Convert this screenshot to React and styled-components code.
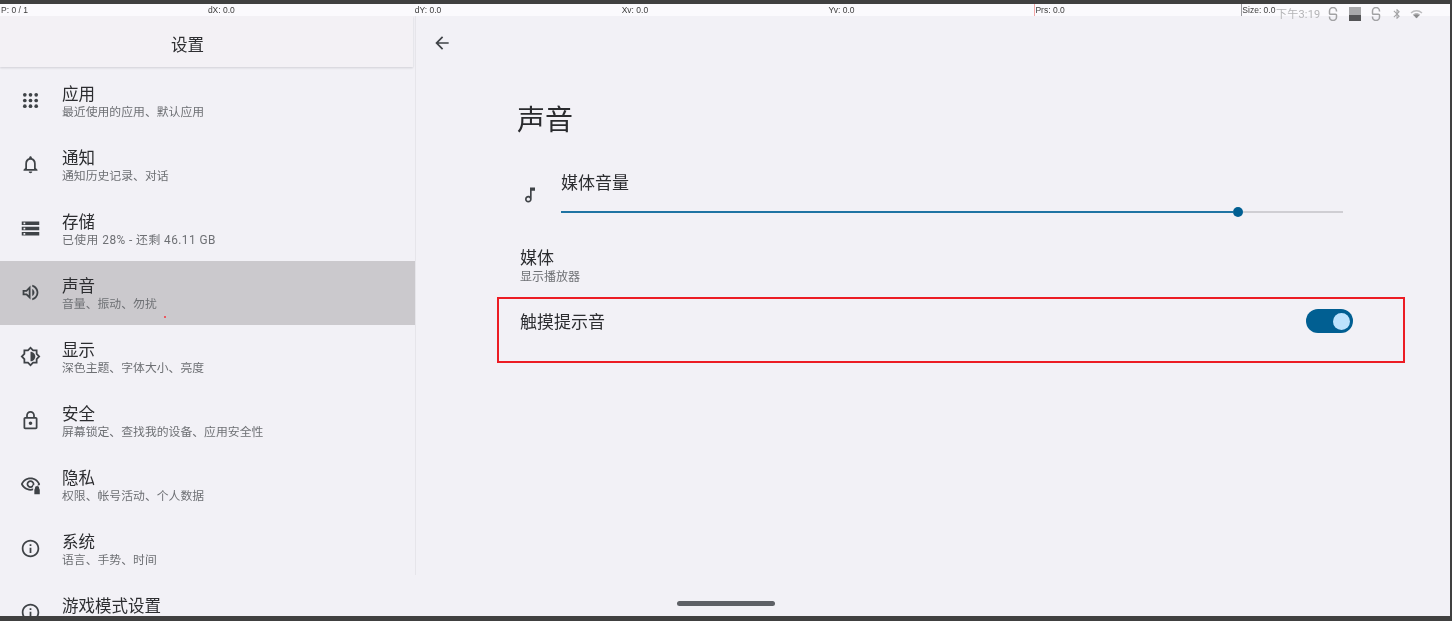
import React from "react";
import styled, { createGlobalStyle } from "styled-components";

const Global = createGlobalStyle`
  html, body {
    margin: 0;
    padding: 0;
    background: #404040;
    overflow: hidden;
  }
  body {
    font-family: Roboto, "Noto Sans CJK SC", sans-serif;
  }
`;

const Frame = styled.div`
  position: relative;
  width: 1452px;
  height: 621px;
  box-sizing: border-box;
  padding: 4px 2px 5px 0;
  display: flex;
  flex-direction: column;
  overflow: hidden;
  background: #404040;
  filter: blur(0.3px);
`;

const DebugBar = styled.div`
  height: 12px;
  flex: none;
  display: grid;
  grid-template-columns: repeat(7, 206.9px);
  background: #fbfafd;
`;

const DebugCell = styled.div`
  box-sizing: border-box;
  height: 12px;
  padding-left: ${({ $mark }) => ($mark ? "0" : "1px")};
  border-left: ${({ $mark }) => ($mark ? `1px solid ${$mark}` : "none")};
  font: 8.5px/13px "Liberation Sans", sans-serif;
  color: #3c3c3c;
  white-space: nowrap;
`;

const StatusBar = styled.div`
  position: absolute;
  top: 7px;
  left: 1276px;
  height: 14px;
  display: flex;
  align-items: center;
  color: #a2a2a4;
`;

const Clock = styled.span`
  width: 52px;
  margin-top: 1px;
  font: 11px/14px Roboto, "Noto Sans CJK SC", sans-serif;
  letter-spacing: 0.2px;
  color: #b4b4b6;
  white-space: nowrap;
`;

const StatusGlyph = styled.svg`
  width: ${({ $w }) => $w}px;
  height: 14px;
  margin-right: ${({ $gap }) => $gap}px;
  flex: none;
`;

const Screen = styled.div`
  flex: 1;
  min-height: 0;
  display: flex;
  background: #f2f1f6;
  overflow: hidden;
`;

const Sidebar = styled.nav`
  width: 415px;
  flex: none;
  display: flex;
  flex-direction: column;
`;

const SideHeader = styled.header`
  height: 51px;
  flex: none;
  width: 413px;
  box-sizing: border-box;
  margin-bottom: 2px;
  padding: 4px 38px 0 0;
  display: flex;
  align-items: center;
  justify-content: center;
  font-size: 16.5px;
  color: #2e2f32;
  box-shadow: 0 1px 2px rgba(90, 90, 100, 0.22);
  background: #f3f1f5;
`;

const SideRow = styled.div`
  position: relative;
  height: 64px;
  flex: none;
  box-sizing: border-box;
  padding-left: 20px;
  display: flex;
  align-items: center;
  gap: 21px;
  background: ${({ $active }) => ($active ? "#cbc9cd" : "transparent")};

  > svg {
    margin-top: -1px;
  }
`;

const Icon = styled.svg`
  width: ${({ $size }) => $size || 21}px;
  height: ${({ $size }) => $size || 21}px;
  flex: none;
  fill: #3f4347;
`;

const SideText = styled.div`
  padding-top: 3px;
  display: flex;
  flex-direction: column;
`;

const SideTitle = styled.div`
  font-size: 16.5px;
  line-height: 20px;
  color: #2c2d30;
  white-space: nowrap;
`;

const SideSub = styled.div`
  margin-top: -2px;
  min-height: 18px;
  font-size: 11.85px;
  line-height: 18px;
  letter-spacing: ${({ $spacing }) => $spacing || 0}px;
  color: #6e7074;
  white-space: nowrap;
`;

const RedSpeck = styled.span`
  position: absolute;
  left: 164px;
  top: 55px;
  width: 2px;
  height: 2px;
  background: #ea5a62;
`;

const Divider = styled.div`
  width: 1px;
  height: 559px;
  flex: none;
  background: #e6e5ea;
`;

const Detail = styled.main`
  flex: 1;
  min-width: 0;
  box-sizing: border-box;
  padding: 17px 45px 0 81px;
  display: flex;
  flex-direction: column;
`;

const BackButton = styled.div`
  height: 20px;
  margin-left: -65px;
  display: flex;
  align-items: center;
`;

const PageTitle = styled.h1`
  margin: 48px 0 0 20px;
  font-size: 28px;
  line-height: 40px;
  font-weight: 400;
  color: #2a2b2e;
`;

const VolumeRow = styled.div`
  margin-top: 30px;
  padding: 0 62px 0 23px;
  display: flex;
  align-items: center;
  gap: 21px;

  > svg {
    margin-top: 2px;
  }
`;

const VolumeBody = styled.div`
  flex: 1;
  display: flex;
  flex-direction: column;
`;

const VolumeLabel = styled.div`
  font-size: 17px;
  line-height: 24px;
  color: #2c2d30;
`;

const Slider = styled.div`
  margin-top: 12px;
  height: 10px;
  display: flex;
  align-items: center;
`;

const TrackOn = styled.div`
  flex: 672;
  height: 2px;
  background: #1f74a3;
`;

const Thumb = styled.div`
  width: 10px;
  height: 10px;
  flex: none;
  border-radius: 50%;
  background: #015f92;
`;

const TrackOff = styled.div`
  flex: 100;
  height: 2px;
  background: #cfced3;
`;

const MediaBlock = styled.div`
  margin-top: 29px;
  padding-left: 23px;
  display: flex;
  flex-direction: column;
`;

const MediaTitle = styled.div`
  font-size: 17px;
  line-height: 24px;
  color: #2c2d30;
`;

const MediaSub = styled.div`
  font-size: 12px;
  line-height: 14px;
  color: #6e7074;
`;

const Highlight = styled.section`
  margin-top: 13px;
  height: 66px;
  box-sizing: border-box;
  border: 2px solid #ec1c24;
  padding: 10px 50px 0 21px;
  display: flex;
  align-items: flex-start;
  justify-content: space-between;
`;

const TouchLabel = styled.div`
  margin-top: 1px;
  font-size: 17px;
  line-height: 24px;
  color: #2c2d30;
`;

const Toggle = styled.div`
  width: 47px;
  height: 24px;
  box-sizing: border-box;
  padding-right: 3px;
  border-radius: 12px;
  background: #015f92;
  display: flex;
  align-items: center;
  justify-content: flex-end;
`;

const ToggleKnob = styled.div`
  width: 17px;
  height: 17px;
  border-radius: 50%;
  background: #bde3fd;
`;

const GestureBar = styled.div`
  position: absolute;
  left: 677px;
  top: 601px;
  width: 98px;
  height: 5px;
  border-radius: 3px;
  background: #5e6166;
`;

const paths = {
  bell: "M12 22c1.1 0 2-.9 2-2h-4c0 1.1.9 2 2 2zm6-6v-5c0-3.07-1.63-5.64-4.5-6.32V4c0-.83-.67-1.5-1.5-1.5s-1.5.67-1.5 1.5v.68C7.64 5.36 6 7.92 6 11v5l-2 2v1h16v-1l-2-2zm-2 1H8v-6c0-2.48 1.51-4.5 4-4.5s4 2.02 4 4.5v6z",
  storage: "M2 20h20v-4H2v4zm2-3h2v2H4v-2zM2 4v4h20V4H2zm4 3H4V5h2v2zm-4 7h20v-4H2v4zm2-3h2v2H4v-2z",
  sound: "M3 9v6h4l5 5V4L7 9H3zm7-.17v6.34L7.83 13H5v-2h2.83L10 8.83zM16.5 12c0-1.77-1.02-3.29-2.5-4.03v8.05c1.48-.73 2.5-2.25 2.5-4.02zM14 3.23v2.06c2.89.86 5 3.54 5 6.71s-2.11 5.85-5 6.71v2.06c4.01-.91 7-4.49 7-8.77 0-4.28-2.99-7.86-7-8.77z",
  display: "M20 8.69V4h-4.69L12 .69 8.69 4H4v4.69L.69 12 4 15.31V20h4.69L12 23.31 15.31 20H20v-4.69L23.31 12 20 8.69zm-2 5.79V18h-3.52L12 20.48 9.52 18H6v-3.52L3.52 12 6 9.52V6h3.52L12 3.52 14.48 6H18v3.52L20.48 12 18 14.48zM12 6.5v11c3.03 0 5.5-2.47 5.5-5.5S15.03 6.5 12 6.5z",
  lock: "M18 8h-1V6c0-2.76-2.24-5-5-5S7 3.24 7 6v2H6c-1.1 0-2 .9-2 2v10c0 1.1.9 2 2 2h12c1.1 0 2-.9 2-2V10c0-1.1-.9-2-2-2zM9 6c0-1.66 1.34-3 3-3s3 1.34 3 3v2H9V6zm9 14H6V10h12v10zm-6-3c1.1 0 2-.9 2-2s-.9-2-2-2-2 .9-2 2 .9 2 2 2z",
  info: "M11 7h2v2h-2zm0 4h2v6h-2zm1-9C6.48 2 2 6.48 2 12s4.48 10 10 10 10-4.48 10-10S17.52 2 12 2zm0 18c-4.41 0-8-3.59-8-8s3.59-8 8-8 8 3.59 8 8-3.59 8-8 8z",
  eye: "M12 6c3.79 0 7.17 2.13 8.82 5.5C19.17 14.87 15.79 17 12 17s-7.17-2.13-8.82-5.5C4.83 8.13 8.21 6 12 6m0-2C7 4 2.73 7.11 1 11.5 2.73 15.89 7 19 12 19s9.27-3.11 11-7.5C21.27 7.11 17 4 12 4zm0 5c1.38 0 2.5 1.12 2.5 2.5S13.38 14 12 14s-2.5-1.12-2.5-2.5S10.62 9 12 9m0-2c-2.48 0-4.5 2.02-4.5 4.5S9.52 16 12 16s4.5-2.02 4.5-4.5S14.48 7 12 7z",
  music: "M12 3l.01 10.55c-.59-.34-1.27-.54-2-.54C7.79 13.01 6 14.8 6 17s1.79 4 4.01 4S14 19.2 14 17V7h4V3h-6zm-1.99 16c-1.1 0-2-.9-2-2s.9-2 2-2 2 .9 2 2-.9 2-2 2z",
  back: "M20 11H7.83l5.59-5.59L12 4l-8 8 8 8 1.41-1.41L7.83 13H20v-2z",
  bluetooth: "M17.71 7.71L12 2h-1v7.59L6.41 5 5 6.41 10.59 12 5 17.59 6.41 19 11 14.41V22h1l5.71-5.71-4.3-4.29 4.3-4.29zM13 5.83l1.88 1.88L13 9.59V5.83zm1.88 10.46L13 18.17v-3.76l1.88 1.88z",
  wifi: "M1 9l2 2c4.97-4.97 13.03-4.97 18 0l2-2C16.93 2.93 7.08 2.93 1 9zm8 8l3 3 3-3c-1.65-1.66-4.34-1.66-6 0zm-4-4l2 2c2.76-2.76 7.24-2.76 10 0l2-2C15.14 9.14 8.87 9.14 5 13z",
  wifiCore: "M6.5 14.5L12 20l5.5-5.5c-3-3-8-3-11 0z",
  sync: "M8.5 4.6V4a3.5 3.5 0 0 0-7 0v2.4c0 .5.4.8 1 .8h5c.6 0 1 .3 1 .8V10a3.5 3.5 0 0 1-7 0v-.6",
};

const Glyph = ({ name, size }) => (
  <Icon viewBox="0 0 24 24" $size={size}>
    <path d={paths[name]} />
  </Icon>
);

const AppsIcon = () => (
  <Icon viewBox="0 0 24 24">
    {[5.5, 12, 18.5].flatMap((y) =>
      [5.5, 12, 18.5].map((x) => <circle key={`${x}-${y}`} cx={x} cy={y} r="2.1" />)
    )}
  </Icon>
);

const PrivacyIcon = () => (
  <Icon viewBox="0 0 24 24">
    <path d={paths.eye} />
    <rect x="15" y="13" width="9.5" height="10.5" fill="#f2f1f6" />
    <path d="M17 17.5v-1.2a2.5 2.5 0 0 1 5 0v1.2h.6V23h-6.2v-5.5z" />
  </Icon>
);

const SyncGlyph = ({ gap }) => (
  <StatusGlyph viewBox="0 0 10 14" $w={10} $gap={gap}>
    <path d={paths.sync} fill="none" stroke="currentColor" strokeWidth="1.5" />
  </StatusGlyph>
);

const debugValues = [
  { text: "P: 0 / 1" },
  { text: "dX: 0.0" },
  { text: "dY: 0.0" },
  { text: "Xv: 0.0" },
  { text: "Yv: 0.0" },
  { text: "Prs: 0.0", mark: "#f3a6a6" },
  { text: "Size: 0.0", mark: "#9a9a9e" },
];

const menu = [
  { icon: <AppsIcon />, title: "应用", sub: "最近使用的应用、默认应用" },
  { icon: <Glyph name="bell" />, title: "通知", sub: "通知历史记录、对话" },
  { icon: <Glyph name="storage" />, title: "存储", sub: "已使用 28% - 还剩 46.11 GB", spacing: 0.45 },
  { icon: <Glyph name="sound" />, title: "声音", sub: "音量、振动、勿扰", active: true },
  { icon: <Glyph name="display" />, title: "显示", sub: "深色主题、字体大小、亮度" },
  { icon: <Glyph name="lock" />, title: "安全", sub: "屏幕锁定、查找我的设备、应用安全性" },
  { icon: <PrivacyIcon />, title: "隐私", sub: "权限、帐号活动、个人数据" },
  { icon: <Glyph name="info" />, title: "系统", sub: "语言、手势、时间" },
  { icon: <Glyph name="info" />, title: "游戏模式设置", sub: "" },
];

export default function App() {
  return (
    <>
      <Global />
      <Frame>
        <DebugBar>
          {debugValues.map((d) => (
            <DebugCell key={d.text} $mark={d.mark}>
              {d.text}
            </DebugCell>
          ))}
        </DebugBar>
        <Screen>
          <Sidebar>
            <SideHeader>设置</SideHeader>
            {menu.map((item) => (
              <SideRow key={item.title} $active={item.active}>
                {item.icon}
                <SideText>
                  <SideTitle>{item.title}</SideTitle>
                  <SideSub $spacing={item.spacing}>{item.sub}</SideSub>
                </SideText>
                {item.active && <RedSpeck />}
              </SideRow>
            ))}
          </Sidebar>
          <Divider />
          <Detail>
            <BackButton>
              <Glyph name="back" size={20} />
            </BackButton>
            <PageTitle>声音</PageTitle>
            <VolumeRow>
              <Glyph name="music" size={20} />
              <VolumeBody>
                <VolumeLabel>媒体音量</VolumeLabel>
                <Slider>
                  <TrackOn />
                  <Thumb />
                  <TrackOff />
                </Slider>
              </VolumeBody>
            </VolumeRow>
            <MediaBlock>
              <MediaTitle>媒体</MediaTitle>
              <MediaSub>显示播放器</MediaSub>
            </MediaBlock>
            <Highlight>
              <TouchLabel>触摸提示音</TouchLabel>
              <Toggle>
                <ToggleKnob />
              </Toggle>
            </Highlight>
          </Detail>
        </Screen>
        <StatusBar>
          <Clock>下午3:19</Clock>
          <SyncGlyph gap={11} />
          <StatusGlyph viewBox="0 0 12 14" $w={12} $gap={10}>
            <rect x="0" y="0" width="12" height="8" fill="#a9a9ab" />
            <rect x="0" y="8" width="12" height="6" fill="#545456" />
          </StatusGlyph>
          <SyncGlyph gap={10} />
          <StatusGlyph viewBox="0 0 24 24" $w={12} $gap={7}>
            <path d={paths.bluetooth} fill="currentColor" />
          </StatusGlyph>
          <StatusGlyph viewBox="0 0 24 24" $w={13} $gap={0}>
            <path d={paths.wifi} fill="#bdbdbf" />
            <path d={paths.wifiCore} fill="#8a8a8c" />
          </StatusGlyph>
        </StatusBar>
        <GestureBar />
      </Frame>
    </>
  );
}
